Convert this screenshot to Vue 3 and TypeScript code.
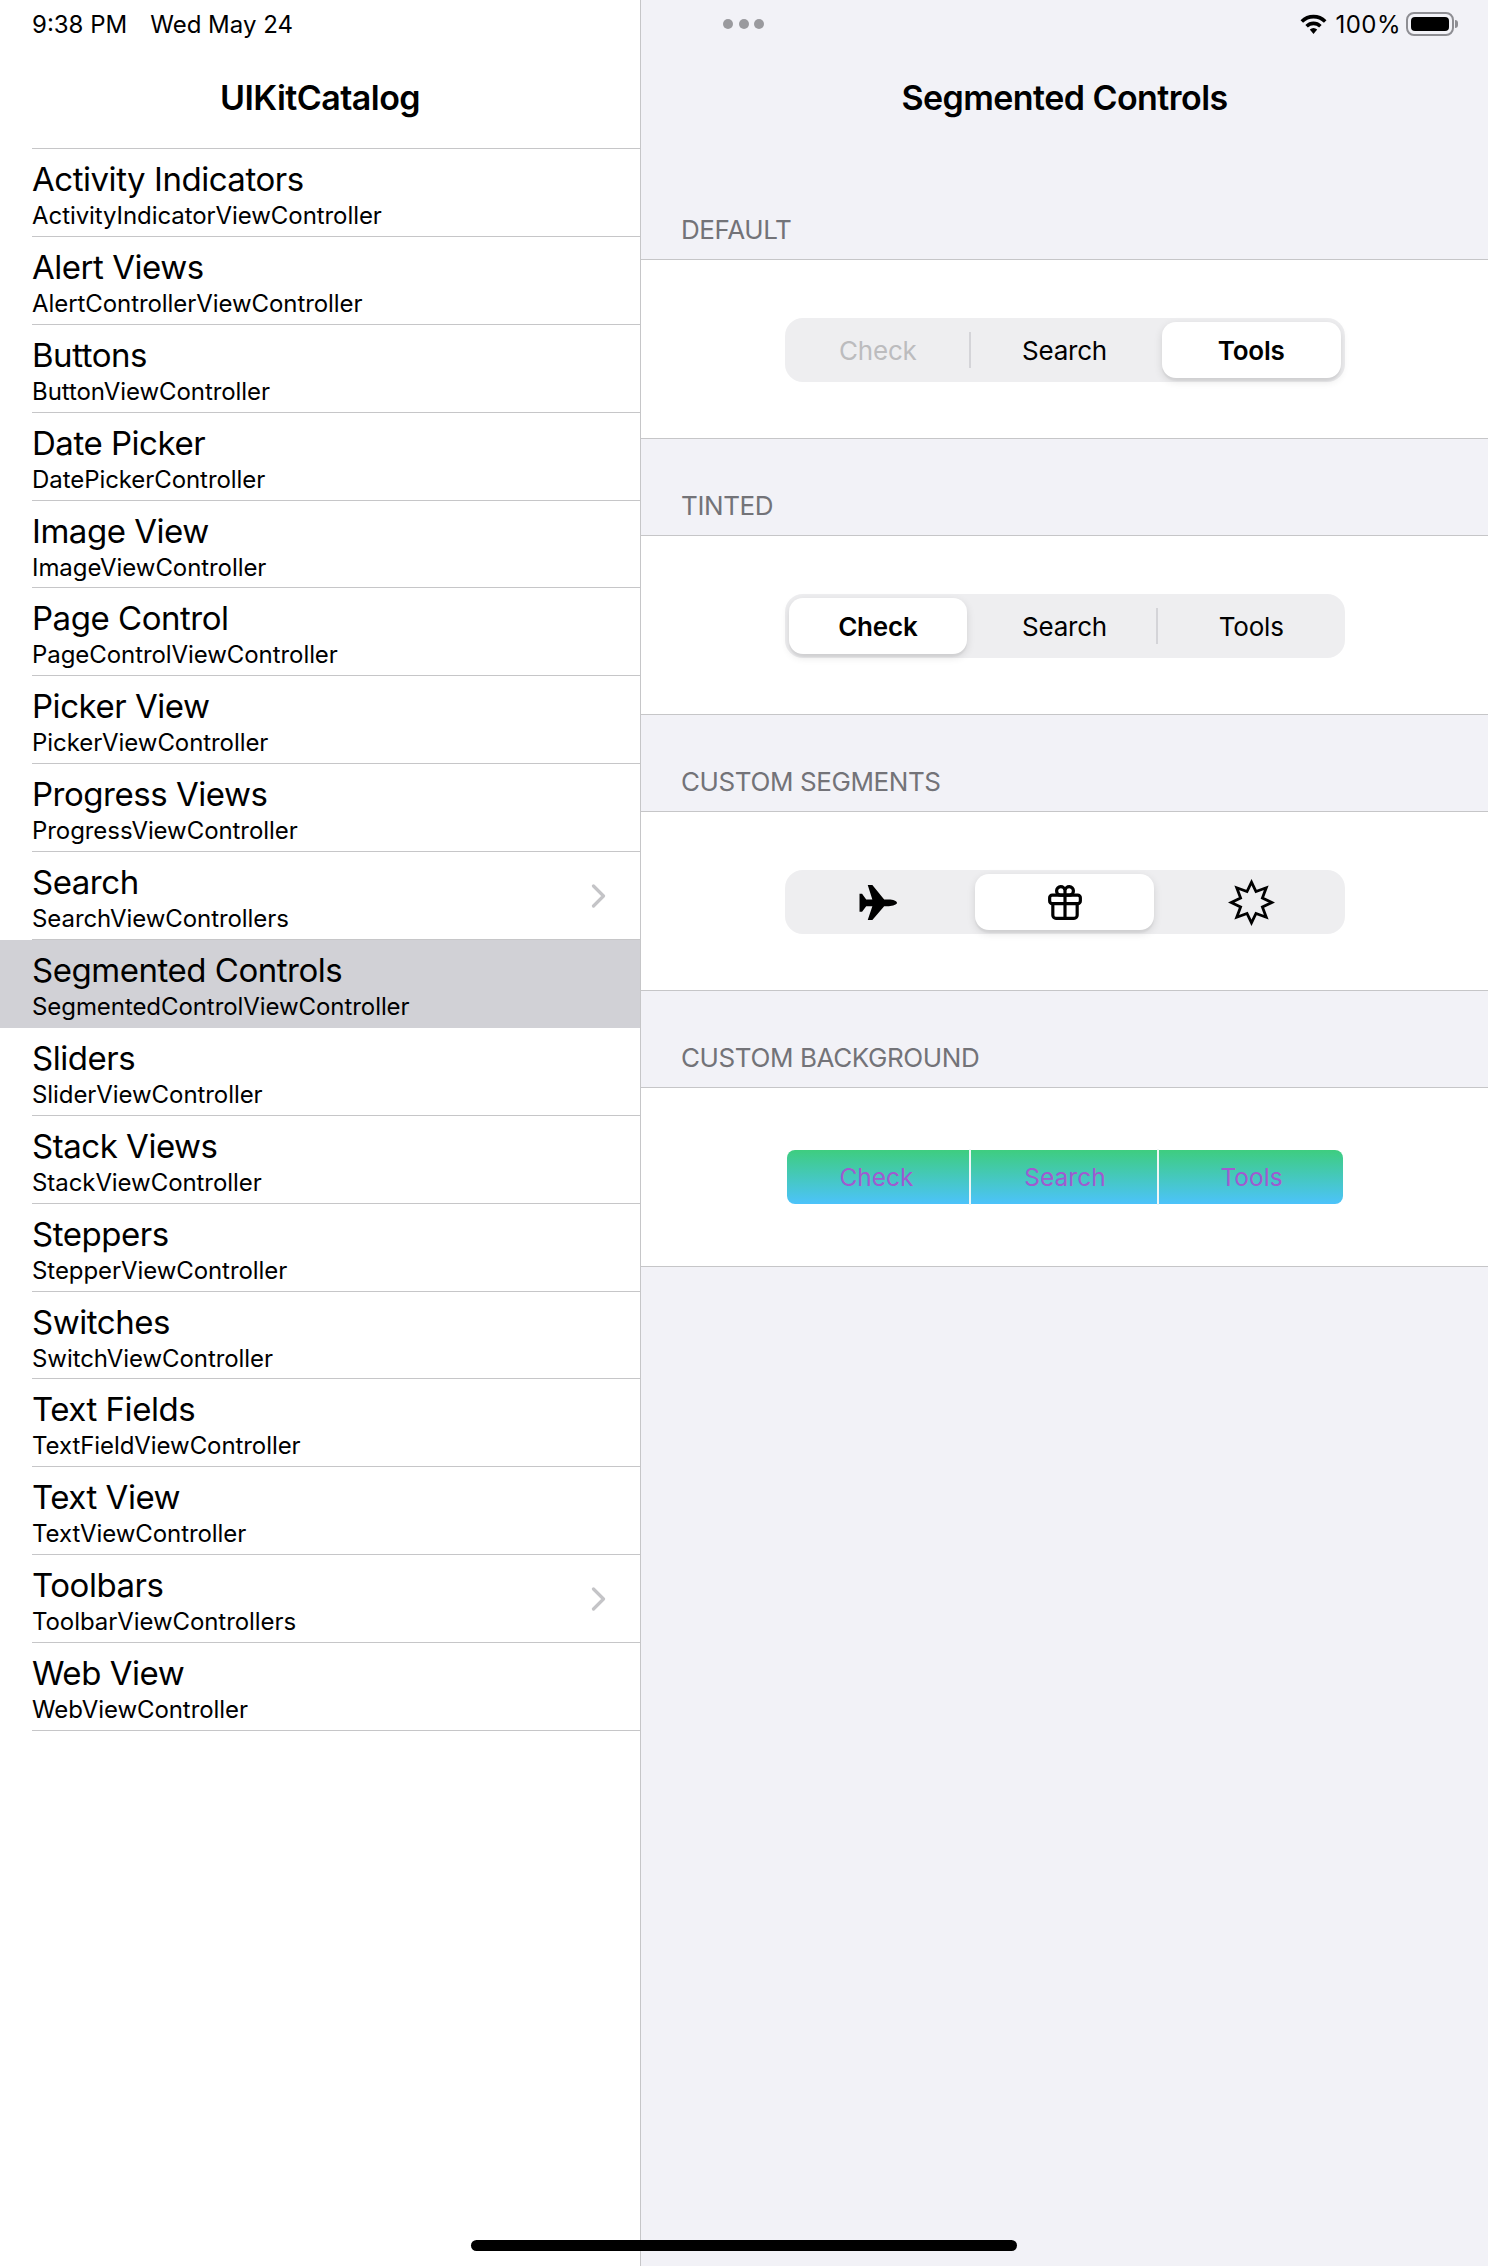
<script setup lang="ts">
interface Row {
  title: string
  sub: string
  chevron?: boolean
  selected?: boolean
}

interface Section {
  title: string
  variant: 'default' | 'tinted' | 'icons' | 'custom'
  active: number
  segments: string[]
}

const rows: Row[] = [
  { title: 'Activity Indicators', sub: 'ActivityIndicatorViewController' },
  { title: 'Alert Views', sub: 'AlertControllerViewController' },
  { title: 'Buttons', sub: 'ButtonViewController' },
  { title: 'Date Picker', sub: 'DatePickerController' },
  { title: 'Image View', sub: 'ImageViewController' },
  { title: 'Page Control', sub: 'PageControlViewController' },
  { title: 'Picker View', sub: 'PickerViewController' },
  { title: 'Progress Views', sub: 'ProgressViewController' },
  { title: 'Search', sub: 'SearchViewControllers', chevron: true },
  { title: 'Segmented Controls', sub: 'SegmentedControlViewController', selected: true },
  { title: 'Sliders', sub: 'SliderViewController' },
  { title: 'Stack Views', sub: 'StackViewController' },
  { title: 'Steppers', sub: 'StepperViewController' },
  { title: 'Switches', sub: 'SwitchViewController' },
  { title: 'Text Fields', sub: 'TextFieldViewController' },
  { title: 'Text View', sub: 'TextViewController' },
  { title: 'Toolbars', sub: 'ToolbarViewControllers', chevron: true },
  { title: 'Web View', sub: 'WebViewController' },
]

const labels = ['Check', 'Search', 'Tools']

const sections: Section[] = [
  { title: 'DEFAULT', variant: 'default', active: 2, segments: labels },
  { title: 'TINTED', variant: 'tinted', active: 0, segments: labels },
  { title: 'CUSTOM SEGMENTS', variant: 'icons', active: 1, segments: ['plane', 'gift', 'burst'] },
  { title: 'CUSTOM BACKGROUND', variant: 'custom', active: -1, segments: labels },
]
</script>

<template>
  <div class="ipad">
    <aside class="sidebar">
      <div class="status status--left">
        <span>9:38 PM</span>
        <span>Wed May 24</span>
      </div>
      <h1 class="nav-title nav-title--side">UIKitCatalog</h1>
      <ul class="list">
        <li
          v-for="row in rows"
          :key="row.title"
          :class="['row', { 'row--selected': row.selected }]"
        >
          <div class="row__text">
            <span class="row__title">{{ row.title }}</span>
            <span class="row__sub">{{ row.sub }}</span>
          </div>
          <svg v-if="row.chevron" class="chevron" width="15" height="24" viewBox="0 0 15 24" fill="none">
            <path d="M2.5 2 12.5 12 2.5 22" stroke="#c4c4c7" stroke-width="3.2" stroke-linecap="round" stroke-linejoin="round" />
          </svg>
        </li>
      </ul>
    </aside>

    <main class="detail">
      <div class="status status--right">
        <div class="dots"><i></i><i></i><i></i></div>
        <div class="status__icons">
          <svg width="27" height="21" viewBox="0 0 27 21" fill="none">
            <path d="M1.8 7.6C8.4 1 18.6 1 25.2 7.6" stroke="#000" stroke-width="3.6" />
            <path d="M6.6 12.2C10.6 8.4 16.4 8.4 20.4 12.2" stroke="#000" stroke-width="3.6" />
            <path d="M9.8 15.6C12.1 13.6 14.9 13.6 17.2 15.6L13.5 20Z" fill="#000" />
          </svg>
          <span>100%</span>
          <div class="battery"><div class="battery__fill"></div></div>
          <div class="battery__nub"></div>
        </div>
      </div>
      <h1 class="nav-title nav-title--detail">Segmented Controls</h1>

      <section v-for="section in sections" :key="section.title" class="section">
        <h2 class="section__title">{{ section.title }}</h2>
        <div class="section__body">
          <div :class="['segmented', `segmented--${section.variant}`]">
            <div
              v-for="(seg, i) in section.segments"
              :key="seg"
              :class="[
                'seg',
                {
                  'seg--active': i === section.active,
                  'seg--divided': i > 0 && i !== section.active && i - 1 !== section.active,
                  'seg--disabled': section.variant === 'default' && i === 0,
                },
              ]"
            >
              <div class="seg__label">
                <svg v-if="seg === 'plane'" width="38" height="35" viewBox="0 0 37 34" fill="#000">
                  <path d="M37 17.3C37 15.5 33 14 29 14H24.5L13 0H8.5L13 14H7L3 8.5H0.5V26H3L7 20.6H13L8.5 34H13L24.5 20.6H29C33 20.6 37 19 37 17.3Z" />
                </svg>
                <svg v-else-if="seg === 'gift'" width="34" height="36" viewBox="0 0 32 34" fill="none" stroke="#000" stroke-width="3">
                  <rect x="1.5" y="10.5" width="29" height="8" rx="2.5" />
                  <path d="M4.5 18.5V29.5A3 3 0 0 0 7.5 32.5H24.5A3 3 0 0 0 27.5 29.5V18.5" />
                  <path d="M16 10.5V32.5" />
                  <path d="M16 10.5H11.5A4 4 0 1 1 16 6ZM16 10.5H20.5A4 4 0 1 0 16 6Z" />
                </svg>
                <svg v-else-if="seg === 'burst'" width="47" height="47" viewBox="0 0 44 44" fill="none" stroke="#000" stroke-width="2.6" stroke-linejoin="miter" stroke-miterlimit="10">
                  <polygon points="22,3 26.2,11.8 35.8,8.2 32.2,17.8 41,22 32.2,26.2 35.8,35.8 26.2,32.2 22,41 17.8,32.2 8.2,35.8 11.8,26.2 3,22 11.8,17.8 8.2,8.2 17.8,11.8" />
                </svg>
                <template v-else>{{ seg }}</template>
              </div>
            </div>
          </div>
        </div>
      </section>
    </main>

    <div class="home-bar"></div>
  </div>
</template>

<style scoped>
.ipad {
  position: relative;
  display: flex;
  width: 1488px;
  height: 2266px;
  overflow: hidden;
  font-family: Inter, "Liberation Sans", sans-serif;
  color: #000;
  background: #fff;
}

/* Status bar */
.status {
  display: flex;
  align-items: center;
  height: 48px;
  font-size: 24px;
}
.status--left {
  gap: 23px;
  padding-left: 32px;
}
.status--right {
  justify-content: space-between;
  padding: 0 30px 0 82px;
}
.status__icons {
  display: flex;
  align-items: center;
}
.status__icons span {
  margin: 0 5px 0 8px;
  letter-spacing: 0.5px;
}
.dots {
  display: flex;
  gap: 5.5px;
}
.dots i {
  display: block;
  width: 10px;
  height: 10px;
  border-radius: 50%;
  background: #9a9a9e;
}
.battery {
  width: 48px;
  height: 24px;
  padding: 3px;
  box-sizing: border-box;
  border: 2px solid #8e8e93;
  border-radius: 8px;
}
.battery__fill {
  height: 100%;
  border-radius: 4px;
  background: #000;
}
.battery__nub {
  width: 3px;
  height: 8px;
  margin-left: 1px;
  border-radius: 0 3px 3px 0;
  background: #8e8e93;
}

.nav-title {
  margin: 24px 0 0;
  height: 52px;
  line-height: 52px;
  font-size: 34px;
  font-weight: 600;
  text-align: center;
  letter-spacing: -0.55px;
}
.nav-title--side {
  margin-bottom: 24px;
}
.nav-title--detail {
  margin-bottom: 39px;
}

/* Sidebar list */
.sidebar {
  width: 640px;
  flex: none;
  border-right: 1px solid #c6c6c8;
  background: #fff;
}
.list {
  margin: 0 0 0 32px;
  padding: 0;
  list-style: none;
  border-top: 1px solid #c6c6c8;
}
.row {
  display: flex;
  align-items: center;
  justify-content: space-between;
  height: 87.9px;
  box-sizing: border-box;
  padding: 0 34px 0 0;
  border-bottom: 1px solid #c6c6c8;
}
.row--selected {
  margin-left: -32px;
  padding-left: 32px;
  background: #d1d1d6;
  border-bottom-color: #d1d1d6;
}
.row__text {
  display: flex;
  flex-direction: column;
  padding-top: 5px;
}
.row__title {
  font-size: 33px;
  line-height: 41px;
  letter-spacing: -0.47px;
}
.row__sub {
  font-size: 24px;
  line-height: 31px;
  letter-spacing: -0.07px;
}

/* Detail */
.detail {
  flex: 1;
  background: #f2f2f7;
}
.section__title {
  margin: 0;
  height: 96px;
  box-sizing: border-box;
  padding: 47px 0 0 40px;
  line-height: 40px;
  font-size: 26px;
  font-weight: 400;
  letter-spacing: -0.4px;
  color: #737378;
}
.section__body {
  display: flex;
  justify-content: center;
  height: 180px;
  box-sizing: border-box;
  padding-top: 58px;
  background: #fff;
  border-top: 1px solid #c6c6c8;
  border-bottom: 1px solid #c6c6c8;
}

/* Segmented control */
.segmented {
  display: flex;
  width: 560px;
  height: 64px;
  border-radius: 18px;
  background: #eeeef0;
  font-size: 26px;
  letter-spacing: -0.2px;
}
.seg {
  position: relative;
  flex: 1;
  padding: 4px;
  box-sizing: border-box;
}
.seg__label {
  display: flex;
  align-items: center;
  justify-content: center;
  height: 100%;
  border-radius: 14px;
}
.seg--active .seg__label {
  background: #fff;
  font-weight: 600;
  box-shadow: 0 3px 8px rgba(0, 0, 0, 0.12), 0 3px 1px rgba(0, 0, 0, 0.04);
}
.seg--disabled {
  color: #bcbcbe;
}
.seg--divided::before {
  content: "";
  position: absolute;
  left: -2px;
  top: 14px;
  bottom: 14px;
  width: 2px;
  background: #d4d4d8;
}

.segmented--custom {
  width: 556px;
  height: 54px;
  margin-top: 4px;
  border-radius: 8px;
  background: linear-gradient(#3ecd7f, #4cc3fb);
  color: #a05ad0;
  font-size: 24.5px;
  letter-spacing: 0;
}
.segmented--custom .seg {
  flex: none;
  width: 185px;
  padding-left: 7px;
}
.segmented--custom .seg:first-child {
  width: 183px;
  padding-left: 4px;
  padding-right: 7px;
}
.segmented--custom .seg:nth-child(2) {
  width: 188px;
}
.segmented--custom .seg--divided::before {
  left: -1px;
  top: -1px;
  bottom: -1px;
  background: #f0f6f6;
}

.home-bar {
  position: absolute;
  left: 471px;
  top: 2240px;
  width: 546px;
  height: 11px;
  border-radius: 6px;
  background: #000;
}
</style>

<style>
html,
body {
  margin: 0;
  background: #fff;
}
</style>
